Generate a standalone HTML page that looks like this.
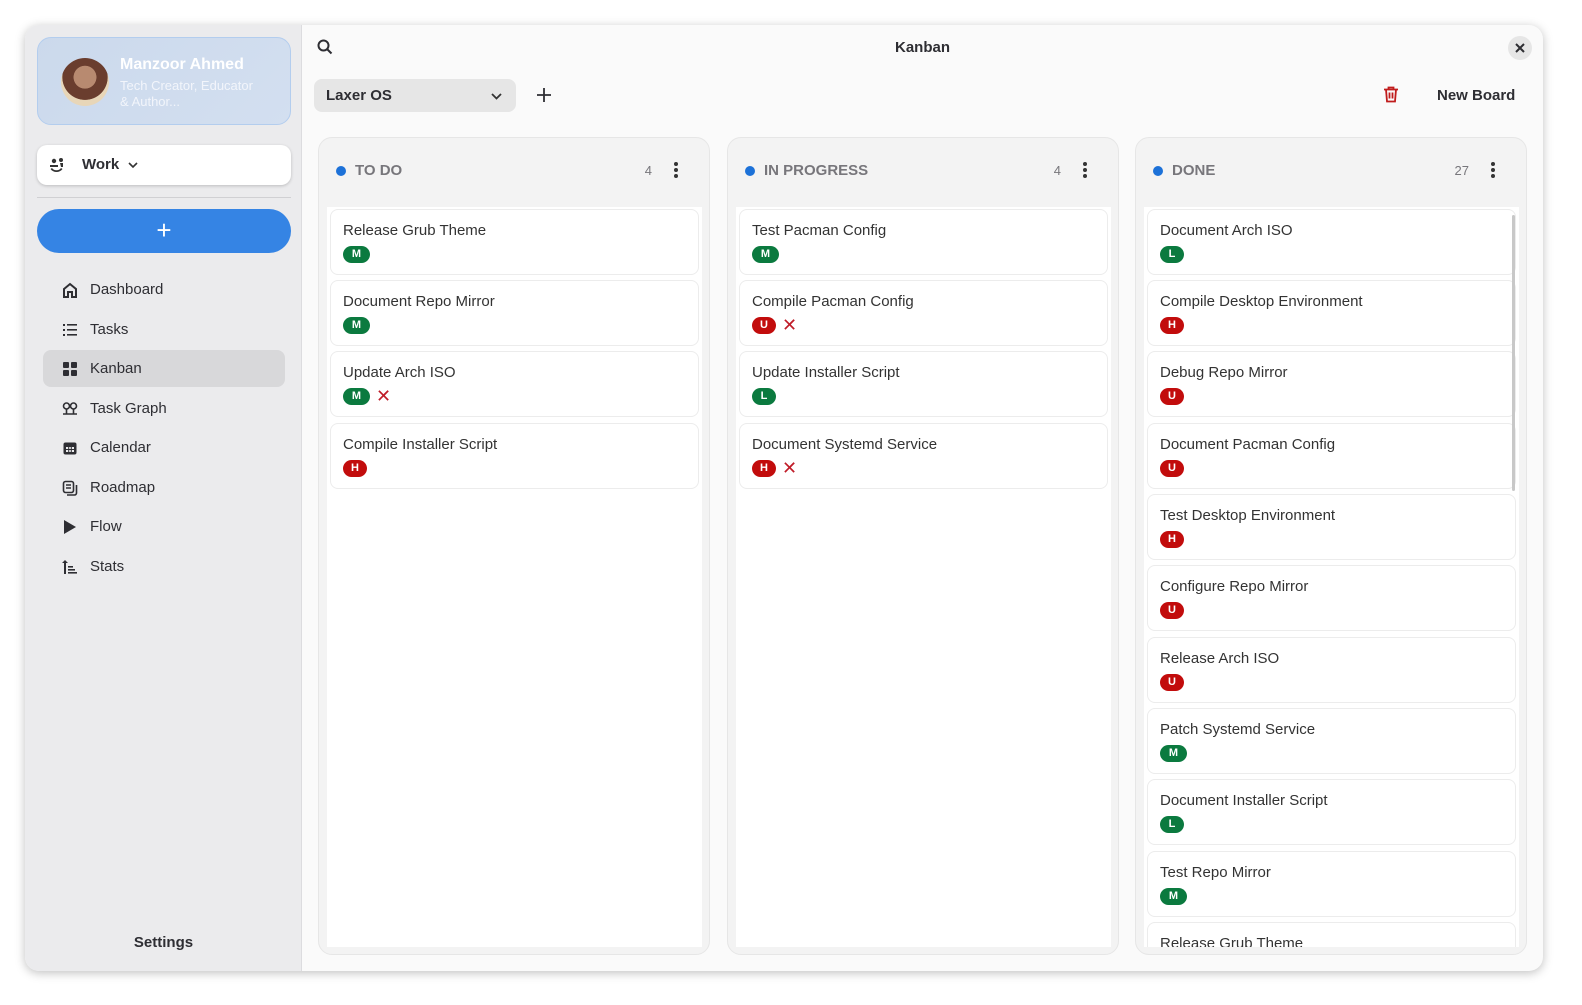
<!DOCTYPE html>
<html><head><meta charset="utf-8"><style>
*{box-sizing:border-box;margin:0;padding:0}
body{width:1582px;height:1005px;background:#fff;font-family:"Liberation Sans",sans-serif;position:relative;overflow:hidden;color:#2e2e33}
.win{position:absolute;left:25px;top:25px;width:1518px;height:946px;border-radius:14px;background:#fafafa;box-shadow:0 2px 10px rgba(0,0,0,.25);overflow:hidden}
.side{position:absolute;left:0;top:0;width:277px;height:946px;background:#ebebed;border-right:1px solid #dcdcdf}
.prof{position:absolute;left:12px;top:12px;width:254px;height:88px;border-radius:14px;background:linear-gradient(135deg,#cbd9ec,#d3dff0);border:1px solid #b3cdee}
.av{position:absolute;left:23px;top:20px;width:48px;height:48px;border-radius:50%;background:radial-gradient(circle at 50% 40%,#b88a70 0 30%,#6a3d2e 31% 60%,#e8d6b8 61%)}
.pn{position:absolute;left:82px;top:18px;color:#fff;font-weight:bold;font-size:16px}
.pd{position:absolute;left:82px;top:40px;color:#f2f5fb;font-size:13px;line-height:16px;width:140px}
.work{position:absolute;left:12px;top:120px;width:254px;height:40px;background:#fff;border-radius:10px;box-shadow:0 1px 3px rgba(0,0,0,.2)}
.work span{position:absolute;left:45px;top:11px;font-weight:bold;font-size:15px}
.hr{position:absolute;left:12px;top:172px;width:254px;height:1px;background:#d0d0d3}
.add{position:absolute;left:12px;top:184px;width:254px;height:44px;background:#3584e4;border-radius:22px;color:#fff;font-size:26px;text-align:center;line-height:42px}
.nav{position:absolute;left:18px;width:242px;height:37px;border-radius:8px;font-size:15px}
.nav.sel{background:#d8d8da}
.nav svg{position:absolute;left:19px;top:11px}
.nav span{position:absolute;left:47px;top:10px}
.set{position:absolute;left:0;width:277px;top:909px;text-align:center;font-weight:bold;font-size:15px}
.title{position:absolute;left:870px;top:14px;font-weight:bold;font-size:15px}
.close{position:absolute;left:1483px;top:11px;width:24px;height:24px;border-radius:50%;background:#e6e6e6}
.sel2{position:absolute;left:289px;top:54px;width:202px;height:33px;background:#e6e6e6;border-radius:8px}
.sel2 span{position:absolute;left:12px;top:8px;font-weight:bold;font-size:15px}
.nb{position:absolute;left:1412px;top:62px;font-weight:bold;font-size:15px}
.col{position:absolute;top:112px;width:392px;height:818px;background:#f3f3f3;border:1px solid #e6e6e6;border-radius:14px;overflow:hidden}
.col .dot{position:absolute;left:17px;top:28px;width:10px;height:10px;border-radius:50%;background:#1c71d8}
.col .h{position:absolute;left:36px;top:24px;font-weight:bold;font-size:15px;color:#77767b}
.col .n{position:absolute;right:57px;top:25px;font-size:13px;color:#77767b}
.col .m{position:absolute;right:31px;top:24px;width:4px}
.col .m i{display:block;width:4px;height:4px;border-radius:50%;background:#333;margin-bottom:2px}
.list{position:absolute;left:8px;top:69px;width:375px;height:740px;background:#fff;overflow:hidden}
.card{position:absolute;left:3px;width:369px;height:66px;border:1px solid #ececec;border-radius:8px;background:#fff}
.card .t{position:absolute;left:12px;top:12px;font-size:15px;color:#333}
.b{position:absolute;left:12px;top:36px;height:17px;border-radius:9px;color:#fff;font-weight:bold;font-size:11px;line-height:17px;text-align:center;width:24px}
.b.M{width:27px;background:#0b7a3f}.b.L{background:#0b7a3f}.b.U,.b.H{background:#c20c0c}
.x{position:absolute;top:35px;color:#c01c28;font-size:18px;line-height:18px}
</style></head><body>
<div class="win">
 <div class="side">
  <div class="prof"><div class="av"></div><div class="pn">Manzoor Ahmed</div><div class="pd">Tech Creator, Educator &amp; Author...</div></div>
  <div class="work"><svg style="position:absolute;left:12px;top:12px" width="16" height="16" viewBox="0 0 16 16" fill="#333"><circle cx="5" cy="4" r="2.2"/><circle cx="12" cy="3" r="2"/><path d="M1 8h8v2H1zM3 11c2 3 7 3 9 0l1.5 1c-3 4-9 4-12 0z"/><path d="M11 6h3v4h-2z"/></svg><span>Work&nbsp; <svg width="10" height="8" viewBox="0 0 10 8"><path d="M1 2l4 4 4-4" stroke="#333" stroke-width="1.6" fill="none"/></svg></span></div>
  <div class="hr"></div>
  <div class="add">+</div>
  <div class="nav" style="top:246px"><svg width="16" height="16" viewBox="0 0 16 16"><path d="M2 7l6-5 6 5v8h-4v-5H6v5H2z" fill="none" stroke="#2e2e33" stroke-width="2"/></svg><span>Dashboard</span></div>
  <div class="nav" style="top:286px"><svg width="16" height="16" viewBox="0 0 16 16" fill="#2e2e33"><rect x="1" y="2" width="2" height="2"/><rect x="1" y="7" width="2" height="2"/><rect x="1" y="12" width="2" height="2"/><rect x="5" y="2" width="10" height="1.6"/><rect x="5" y="7" width="10" height="1.6"/><rect x="5" y="12" width="10" height="1.6"/></svg><span>Tasks</span></div>
  <div class="nav sel" style="top:325px"><svg width="16" height="16" viewBox="0 0 16 16" fill="#2e2e33"><rect x="1" y="1" width="6" height="6" rx="1"/><rect x="9" y="1" width="6" height="6" rx="1"/><rect x="1" y="9" width="6" height="6" rx="1"/><rect x="9" y="9" width="6" height="6" rx="1"/></svg><span>Kanban</span></div>
  <div class="nav" style="top:365px"><svg width="16" height="16" viewBox="0 0 16 16" fill="none" stroke="#2e2e33" stroke-width="1.6"><circle cx="4.5" cy="5" r="3"/><circle cx="11.5" cy="5" r="3"/><path d="M1 13h14M4.5 8v5M11.5 8v5"/></svg><span>Task Graph</span></div>
  <div class="nav" style="top:404px"><svg width="16" height="16" viewBox="0 0 16 16"><rect x="1.5" y="2.5" width="13" height="12" rx="2" fill="#2e2e33"/><rect x="4" y="7" width="8" height="5" fill="#ebebed"/><path d="M4 9.5h8M6.7 7v5M9.3 7v5" stroke="#2e2e33"/></svg><span>Calendar</span></div>
  <div class="nav" style="top:444px"><svg width="16" height="16" viewBox="0 0 16 16" fill="none" stroke="#2e2e33" stroke-width="1.6"><rect x="1.5" y="1.5" width="10" height="11" rx="2"/><path d="M14.5 5v8a2 2 0 0 1-2 2H5M4 5h5M4 8h5"/></svg><span>Roadmap</span></div>
  <div class="nav" style="top:483px"><svg width="16" height="16" viewBox="0 0 16 16"><path d="M2 1l12 7-12 7z" fill="#2e2e33"/></svg><span>Flow</span></div>
  <div class="nav" style="top:523px"><svg width="16" height="16" viewBox="0 0 16 16" fill="#2e2e33"><path d="M3 1l3 3H4v11H2V4H0z"/><rect x="6" y="7" width="5" height="1.6"/><rect x="6" y="10" width="7" height="1.6"/><rect x="6" y="13" width="9" height="1.6"/></svg><span>Stats</span></div>
  <div class="set">Settings</div>
 </div>
 <svg style="position:absolute;left:292px;top:14px" width="16" height="16" viewBox="0 0 16 16" fill="none" stroke="#2e2e33" stroke-width="2"><circle cx="6.5" cy="6.5" r="5"/><path d="M10 10l4.5 4.5"/></svg>
 <div class="title">Kanban</div>
 <div class="close"><svg style="position:absolute;left:7px;top:7px" width="10" height="10" viewBox="0 0 10 10"><path d="M1 1l8 8M9 1l-8 8" stroke="#2e2e33" stroke-width="2"/></svg></div>
 <div class="sel2"><span>Laxer OS</span><svg style="position:absolute;left:177px;top:13px" width="11" height="8" viewBox="0 0 11 8"><path d="M1 2l4.5 4.5L10 2" stroke="#333" stroke-width="1.8" fill="none"/></svg></div>
 <svg style="position:absolute;left:511px;top:62px" width="16" height="16" viewBox="0 0 16 16"><path d="M8 1v14M1 8h14" stroke="#2e2e33" stroke-width="1.8"/></svg>
 <svg style="position:absolute;left:1358px;top:61px" width="16" height="17" viewBox="0 0 16 17" fill="none" stroke="#c01c1c" stroke-width="1.8"><path d="M1 3.5h14M5.5 3.5V1.5h5v2M3 3.5l1 12h8l1-12M6.5 6.5v6M9.5 6.5v6"/></svg>
 <div class="nb">New Board</div>

 <div class="col" style="left:293px"><div class="dot"></div><div class="h">TO DO</div><div class="n">4</div><div class="m"><i></i><i></i><i></i></div>
  <div class="list">
   <div class="card" style="top:2px"><div class="t">Release Grub Theme</div><div class="b M">M</div></div>
   <div class="card" style="top:73px"><div class="t">Document Repo Mirror</div><div class="b M">M</div></div>
   <div class="card" style="top:144px"><div class="t">Update Arch ISO</div><div class="b M">M</div><div class="x" style="left:45px">✕</div></div>
   <div class="card" style="top:216px"><div class="t">Compile Installer Script</div><div class="b H">H</div></div>
  </div></div>

 <div class="col" style="left:702px"><div class="dot"></div><div class="h">IN PROGRESS</div><div class="n">4</div><div class="m"><i></i><i></i><i></i></div>
  <div class="list">
   <div class="card" style="top:2px"><div class="t">Test Pacman Config</div><div class="b M">M</div></div>
   <div class="card" style="top:73px"><div class="t">Compile Pacman Config</div><div class="b U">U</div><div class="x" style="left:42px">✕</div></div>
   <div class="card" style="top:144px"><div class="t">Update Installer Script</div><div class="b L">L</div></div>
   <div class="card" style="top:216px"><div class="t">Document Systemd Service</div><div class="b H">H</div><div class="x" style="left:42px">✕</div></div>
  </div></div>

 <div class="col" style="left:1110px"><div class="dot"></div><div class="h">DONE</div><div class="n">27</div><div class="m"><i></i><i></i><i></i></div>
  <div class="list">
   <div class="card" style="top:2px"><div class="t">Document Arch ISO</div><div class="b L">L</div></div>
   <div class="card" style="top:73px"><div class="t">Compile Desktop Environment</div><div class="b H">H</div></div>
   <div class="card" style="top:144px"><div class="t">Debug Repo Mirror</div><div class="b U">U</div></div>
   <div class="card" style="top:216px"><div class="t">Document Pacman Config</div><div class="b U">U</div></div>
   <div class="card" style="top:287px"><div class="t">Test Desktop Environment</div><div class="b H">H</div></div>
   <div class="card" style="top:358px"><div class="t">Configure Repo Mirror</div><div class="b U">U</div></div>
   <div class="card" style="top:430px"><div class="t">Release Arch ISO</div><div class="b U">U</div></div>
   <div class="card" style="top:501px"><div class="t">Patch Systemd Service</div><div class="b M">M</div></div>
   <div class="card" style="top:572px"><div class="t">Document Installer Script</div><div class="b L">L</div></div>
   <div class="card" style="top:644px"><div class="t">Test Repo Mirror</div><div class="b M">M</div></div>
   <div class="card" style="top:715px"><div class="t">Release Grub Theme</div><div class="b M">M</div></div>
   <div style="position:absolute;left:368px;top:8px;width:3px;height:276px;border-radius:2px;background:#c8c8c8"></div>
  </div></div>
</div>
</body></html>
